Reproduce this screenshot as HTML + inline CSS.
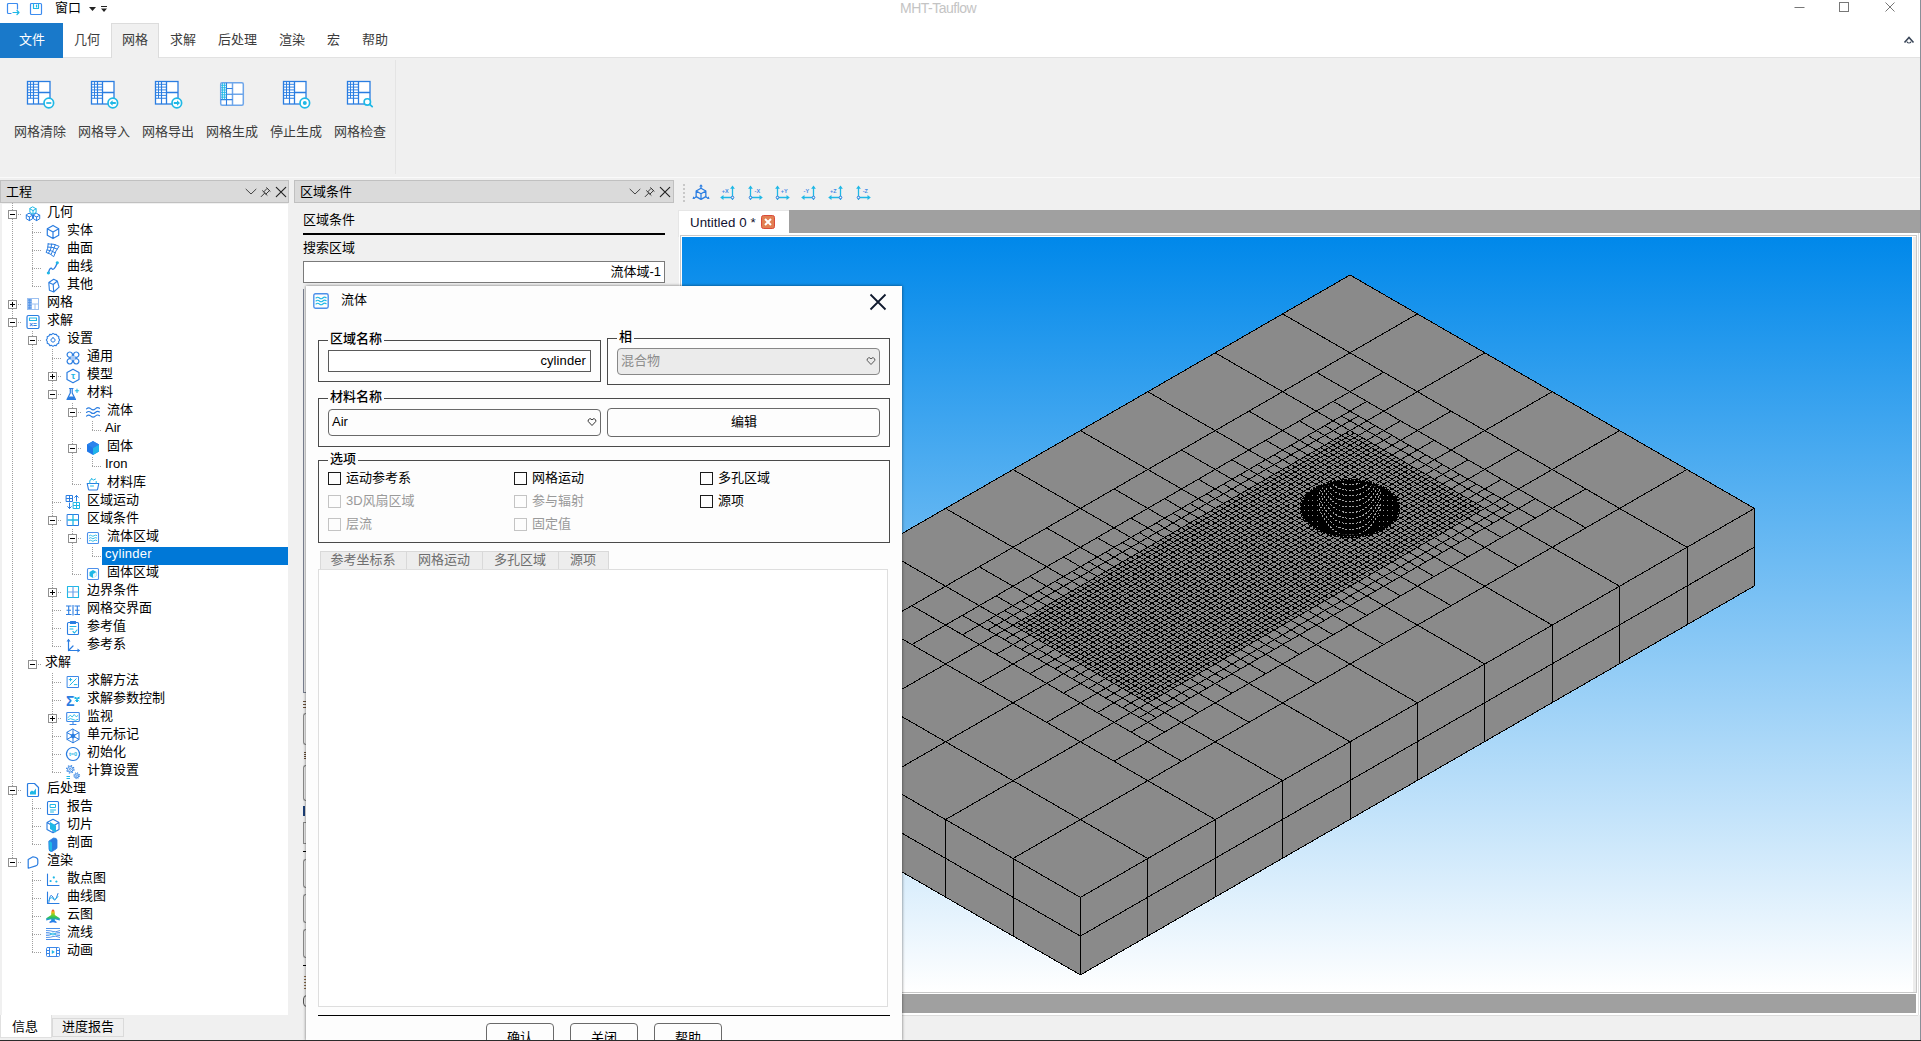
<!DOCTYPE html><html lang="zh"><head><meta charset="utf-8"><title>MHT-Tauflow</title><style>
*{box-sizing:border-box;margin:0;padding:0}
html,body{width:1921px;height:1041px;overflow:hidden;background:#f0f0f0}
body{font-family:"Liberation Sans","Noto Sans CJK SC",sans-serif;font-size:13px;color:#000;position:relative;line-height:1}
.a{position:absolute}
.t{position:absolute;white-space:nowrap;line-height:18px;height:18px}
svg{position:absolute;overflow:visible}
.exp{position:absolute;width:9px;height:9px;border:1px solid #919191;background:#fff}
.exp i{position:absolute;left:1px;top:3px;width:5px;height:1px;background:#000}
.exp b{position:absolute;left:3px;top:1px;width:1px;height:5px;background:#000}
.vd{position:absolute;width:1px;background-image:linear-gradient(#a0a0a0 50%,transparent 50%);background-size:1px 2px}
.hd{position:absolute;height:1px;background-image:linear-gradient(90deg,#a0a0a0 50%,transparent 50%);background-size:2px 1px}
.gb{position:absolute;border:1px solid #4a4a4a}
.gl{position:absolute;background:#fdfdfd;padding:0 2px;font-weight:500;line-height:16px;height:16px;white-space:nowrap}
.cb{position:absolute;width:13px;height:13px;border:1px solid #1a1a1a;background:#fdfdfd}
.cb.d{border-color:#c4c4c4}
.btn{position:absolute;border:1px solid #6a6a6a;border-radius:4px;background:#fdfdfd;text-align:center}
</style></head><body>
<div class="a" style="left:0;top:0;width:1920px;height:23px;background:#fff"></div>
<div class="a" style="left:0;top:23px;width:1920px;height:34px;background:#fff"></div>
<svg style="left:5px;top:1px" width="16" height="16" viewBox="0 0 16 16"><path d="M12.500 8V3.500a1 1 0 0 0-1-1h-8a1 1 0 0 0-1 1v8a1 1 0 0 0 1 1H6" fill="none" stroke="#3c8cf0" stroke-width="1.2" stroke-linejoin="round" stroke-linecap="round" /><path d="M8 11.500h6m-2-2l2 2-2 2" fill="none" stroke="#1fb8e6" stroke-width="1.2" stroke-linejoin="round" stroke-linecap="round" /></svg>
<svg style="left:28px;top:1px" width="16" height="16" viewBox="0 0 16 16"><path d="M3.500 2.500h9a1 1 0 0 1 1 1v9a1 1 0 0 1-1 1h-9a1 1 0 0 1-1-1v-9a1 1 0 0 1 1-1z" fill="none" stroke="#3c8cf0" stroke-width="1.2" stroke-linejoin="round" stroke-linecap="round" /><path d="M5.500 2.500v5h5v-5M8.500 4v2" fill="none" stroke="#1fb8e6" stroke-width="1.2" stroke-linejoin="round" stroke-linecap="round" /></svg>
<div class="t" style="left:55px;top:-1px">窗口</div>
<svg style="left:88px;top:6px" width="20" height="8" viewBox="0 0 20 8"><path d="M1 1h7l-3.5 4z" fill="#222"/><path d="M13 0h6v1h-6zM13 2.5h6l-3 3.5z" fill="#222"/></svg>
<div class="t" style="left:900px;top:-1px;color:#c4c4c4;font-size:14px;letter-spacing:-.5px">MHT-Tauflow</div>
<svg style="left:1790px;top:0" width="110" height="16" viewBox="0 0 110 16"><path d="M4.5 7.5h10" stroke="#777" fill="none"/><rect x="49.500" y="2.500" width="9" height="9" stroke="#777" fill="none"/><path d="M95.500 2.500l9 9m0-9l-9 9" stroke="#777" fill="none"/></svg>
<div class="a" style="left:0;top:57px;width:1920px;height:121px;background:#f0f0f0;border-top:1px solid #e2e2e2"></div>
<div class="a" style="left:0;top:23px;width:63px;height:35px;background:#1979ca"></div>
<div class="t" style="left:19px;top:31px;color:#fff">文件</div>
<div class="a" style="left:111px;top:23px;width:48px;height:35px;background:#f0f0f0;border:1px solid #dcdcdc;border-bottom:none"></div>
<div class="t" style="left:74px;top:31px;color:#3c3c3c">几何</div>
<div class="t" style="left:122px;top:31px;color:#3c3c3c">网格</div>
<div class="t" style="left:170px;top:31px;color:#3c3c3c">求解</div>
<div class="t" style="left:218px;top:31px;color:#3c3c3c">后处理</div>
<div class="t" style="left:279px;top:31px;color:#3c3c3c">渲染</div>
<div class="t" style="left:327px;top:31px;color:#3c3c3c">宏</div>
<div class="t" style="left:362px;top:31px;color:#3c3c3c">帮助</div>
<svg style="left:1903px;top:34px" width="12" height="10" viewBox="0 0 12 10"><path d="M1.500 8.500l4.500-5 4.500 5" fill="none" stroke="#3a4658" stroke-width="1.6"/><path d="M4 7.500a2 1.500 0 0 0 4 0" fill="none" stroke="#3a4658" stroke-width="1.200"/></svg>
<div class="a" style="left:0;top:177px;width:1920px;height:1px;background:#fafafa"></div>
<div class="a" style="left:395px;top:60px;width:1px;height:114px;background:#e4e4e4"></div>
<svg style="left:24px;top:78px" width="32" height="32" viewBox="0 0 32 32"><rect x="3.500" y="3.500" width="22.500" height="22.500" fill="#fff" stroke="#2a7de1" stroke-width="1.300"/><path d="M14.500 3.500v22.500M14.500 14.500h11.500" fill="none" stroke="#2a7de1" stroke-width="1.3" stroke-linejoin="round" stroke-linecap="butt"/><path d="M9.500 3.500v22.500M3.500 20.200h11" fill="none" stroke="#2a7de1" stroke-width="1.15" stroke-linejoin="round" stroke-linecap="butt"/><path d="M6.500 3.500v16.700M3.500 6.300h6M3.500 9.100h11M3.500 11.900h6M3.500 14.600h11M3.500 17.400h6M9.500 6.300h5M9.500 11.900h5M9.500 17.400h5" fill="none" stroke="#2a7de1" stroke-width="0.95" stroke-linejoin="round" stroke-linecap="butt"/><circle cx="24.800" cy="25" r="4.800" fill="#fff" stroke="#1fb8e6" stroke-width="1.700"/><path d="M22.300 25h5" fill="none" stroke="#1fb8e6" stroke-width="1.7" stroke-linejoin="round" stroke-linecap="butt"/></svg>
<div class="t" style="left:8px;top:123px;width:64px;text-align:center;color:#3c3c3c">网格清除</div>
<svg style="left:88px;top:78px" width="32" height="32" viewBox="0 0 32 32"><rect x="3.500" y="3.500" width="22.500" height="22.500" fill="#fff" stroke="#2a7de1" stroke-width="1.300"/><path d="M14.500 3.500v22.500M14.500 14.500h11.500" fill="none" stroke="#2a7de1" stroke-width="1.3" stroke-linejoin="round" stroke-linecap="butt"/><path d="M9.500 3.500v22.500M3.500 20.200h11" fill="none" stroke="#2a7de1" stroke-width="1.15" stroke-linejoin="round" stroke-linecap="butt"/><path d="M6.500 3.500v16.700M3.500 6.300h6M3.500 9.100h11M3.500 11.900h6M3.500 14.600h11M3.500 17.400h6M9.500 6.300h5M9.500 11.900h5M9.500 17.400h5" fill="none" stroke="#2a7de1" stroke-width="0.95" stroke-linejoin="round" stroke-linecap="butt"/><circle cx="24.800" cy="25" r="4.800" fill="#fff" stroke="#1fb8e6" stroke-width="1.700"/><path d="M21.600 25l3-2.700v1.800h3.200v1.800h-3.200v1.800z" fill="#1fb8e6"/></svg>
<div class="t" style="left:72px;top:123px;width:64px;text-align:center;color:#3c3c3c">网格导入</div>
<svg style="left:152px;top:78px" width="32" height="32" viewBox="0 0 32 32"><rect x="3.500" y="3.500" width="22.500" height="22.500" fill="#fff" stroke="#2a7de1" stroke-width="1.300"/><path d="M14.500 3.500v22.500M14.500 14.500h11.500" fill="none" stroke="#2a7de1" stroke-width="1.3" stroke-linejoin="round" stroke-linecap="butt"/><path d="M9.500 3.500v22.500M3.500 20.200h11" fill="none" stroke="#2a7de1" stroke-width="1.15" stroke-linejoin="round" stroke-linecap="butt"/><path d="M6.500 3.500v16.700M3.500 6.300h6M3.500 9.100h11M3.500 11.900h6M3.500 14.600h11M3.500 17.400h6M9.500 6.300h5M9.500 11.900h5M9.500 17.400h5" fill="none" stroke="#2a7de1" stroke-width="0.95" stroke-linejoin="round" stroke-linecap="butt"/><circle cx="24.800" cy="25" r="4.800" fill="#fff" stroke="#1fb8e6" stroke-width="1.700"/><path d="M28 25l-3-2.700v1.800h-3.200v1.800h3.200v1.800z" fill="#1fb8e6"/></svg>
<div class="t" style="left:136px;top:123px;width:64px;text-align:center;color:#3c3c3c">网格导出</div>
<svg style="left:216px;top:78px" width="32" height="32" viewBox="0 0 32 32"><rect x="4.700" y="4.700" width="22.600" height="22.600" rx="1.500" fill="#fff" stroke="#6ea6ea" stroke-width="1.500"/><path d="M16.500 4.700v22.600M16.500 16.200h10.800" fill="none" stroke="#6ea6ea" stroke-width="1.5" stroke-linejoin="round" stroke-linecap="butt"/><path d="M10.500 4.700v22.600M10.500 10.500h6M10.500 16.200h6M10.500 21.600h6M4.700 21.600h6" fill="none" stroke="#2f7fe0" stroke-width="1.1" stroke-linejoin="round" stroke-linecap="butt"/><path d="M6.600 5v16.500M8.600 5v16.500M5 7.300h5.500M5 9.700h5.500M5 12h5.500M5 14.400h5.500M5 16.800h5.500M5 19.200h5.500" fill="none" stroke="#1fb8e6" stroke-width="0.9" stroke-linejoin="round" stroke-linecap="butt"/></svg>
<div class="t" style="left:200px;top:123px;width:64px;text-align:center;color:#3c3c3c">网格生成</div>
<svg style="left:280px;top:78px" width="32" height="32" viewBox="0 0 32 32"><rect x="3.500" y="3.500" width="22.500" height="22.500" fill="#fff" stroke="#2a7de1" stroke-width="1.300"/><path d="M14.500 3.500v22.500M14.500 14.500h11.500" fill="none" stroke="#2a7de1" stroke-width="1.3" stroke-linejoin="round" stroke-linecap="butt"/><path d="M9.500 3.500v22.500M3.500 20.200h11" fill="none" stroke="#2a7de1" stroke-width="1.15" stroke-linejoin="round" stroke-linecap="butt"/><path d="M6.500 3.500v16.700M3.500 6.300h6M3.500 9.100h11M3.500 11.900h6M3.500 14.600h11M3.500 17.400h6M9.500 6.300h5M9.500 11.900h5M9.500 17.400h5" fill="none" stroke="#2a7de1" stroke-width="0.95" stroke-linejoin="round" stroke-linecap="butt"/><circle cx="24.800" cy="25" r="4.800" fill="#fff" stroke="#1fb8e6" stroke-width="1.700"/><circle cx="24.800" cy="25" r="2" fill="#1fb8e6"/></svg>
<div class="t" style="left:264px;top:123px;width:64px;text-align:center;color:#3c3c3c">停止生成</div>
<svg style="left:344px;top:78px" width="32" height="32" viewBox="0 0 32 32"><rect x="3.500" y="3.500" width="22.500" height="22.500" fill="#fff" stroke="#2a7de1" stroke-width="1.300"/><path d="M14.500 3.500v22.500M14.500 14.500h11.500" fill="none" stroke="#2a7de1" stroke-width="1.3" stroke-linejoin="round" stroke-linecap="butt"/><path d="M9.500 3.500v22.500M3.500 20.200h11" fill="none" stroke="#2a7de1" stroke-width="1.15" stroke-linejoin="round" stroke-linecap="butt"/><path d="M6.500 3.500v16.700M3.500 6.300h6M3.500 9.100h11M3.500 11.900h6M3.500 14.600h11M3.500 17.400h6M9.500 6.300h5M9.500 11.900h5M9.500 17.400h5" fill="none" stroke="#2a7de1" stroke-width="0.95" stroke-linejoin="round" stroke-linecap="butt"/><circle cx="23.300" cy="23.900" r="3.200" fill="#fff" stroke="#1fb8e6" stroke-width="1.600"/><path d="M25.700 26.300l2.500 2.300" fill="none" stroke="#1fb8e6" stroke-width="1.8" stroke-linejoin="round" stroke-linecap="round" /></svg>
<div class="t" style="left:328px;top:123px;width:64px;text-align:center;color:#3c3c3c">网格检查</div>
<div class="a" style="left:0;top:180px;width:289px;height:23px;background:#dadada;border:1px solid #c0c0c0"></div>
<div class="t" style="left:6px;top:183px">工程</div>
<svg style="left:244px;top:184px" width="46" height="16" viewBox="0 0 46 16"><path d="M2 5.200l5 4.800 5-4.800" fill="none" stroke="#444" stroke-width="1" stroke-linejoin="round" stroke-linecap="round" /><path d="M17.200 12.600L20.800 9M18.500 6.700l4.600 4.600M19.700 7.900l3.500-3.600 2.300 2.300-3.600 3.500M22.600 3.700l3.500 3.500" fill="none" stroke="#3a3a3a" stroke-width="1" stroke-linejoin="round" stroke-linecap="round" /><path d="M32.300 3.300l9.400 9.400m0-9.400l-9.400 9.400" fill="none" stroke="#222" stroke-width="1.15" stroke-linejoin="round" stroke-linecap="round" /></svg>
<div class="a" style="left:2px;top:204px;width:286px;height:811px;background:#fff"></div>
<div class="vd" style="left:32px;top:223px;height:64px"></div>
<div class="vd" style="left:32px;top:331px;height:334px"></div>
<div class="vd" style="left:52px;top:349px;height:298px"></div>
<div class="vd" style="left:72px;top:403px;height:82px"></div>
<div class="vd" style="left:92px;top:421px;height:10px"></div>
<div class="vd" style="left:92px;top:457px;height:10px"></div>
<div class="vd" style="left:72px;top:529px;height:46px"></div>
<div class="vd" style="left:92px;top:547px;height:10px"></div>
<div class="vd" style="left:52px;top:673px;height:100px"></div>
<div class="vd" style="left:32px;top:799px;height:46px"></div>
<div class="vd" style="left:32px;top:871px;height:82px"></div>
<div class="vd" style="left:12px;top:203px;height:659px"></div>
<div class="hd" style="left:18px;top:214px;width:4px"></div>
<div class="exp" style="left:8px;top:210px"><i></i></div>
<svg style="left:25px;top:206px" width="16" height="16" viewBox="0 0 16 16"><path d="M8.00 1.00l3.12 1.80v3.60l-3.12 1.80l-3.12 -1.80v-3.60zM4.88 2.80l3.12 1.80l3.12 -1.80M8.00 4.60v3.60" fill="none" stroke="#1fb8e6" stroke-width="1" stroke-linejoin="round" stroke-linecap="round" /><path d="M4.40 7.40l3.12 1.80v3.60l-3.12 1.80l-3.12 -1.80v-3.60zM1.28 9.20l3.12 1.80l3.12 -1.80M4.40 11.00v3.60" fill="none" stroke="#2a7de1" stroke-width="1" stroke-linejoin="round" stroke-linecap="round" /><path d="M11.60 7.40l3.12 1.80v3.60l-3.12 1.80l-3.12 -1.80v-3.60zM8.48 9.20l3.12 1.80l3.12 -1.80M11.60 11.00v3.60" fill="none" stroke="#2a7de1" stroke-width="1" stroke-linejoin="round" stroke-linecap="round" /></svg>
<div class="t" style="left:47px;top:203px">几何</div>
<div class="hd" style="left:32px;top:232px;width:10px"></div>
<svg style="left:45px;top:224px" width="16" height="16" viewBox="0 0 16 16"><path d="M8.00 1.40l5.72 3.30v6.60l-5.72 3.30l-5.72 -3.30v-6.60zM2.28 4.70l5.72 3.30l5.72 -3.30M8.00 8.00v6.60" fill="none" stroke="#2a7de1" stroke-width="1.2" stroke-linejoin="round" stroke-linecap="round" /></svg>
<div class="t" style="left:67px;top:221px">实体</div>
<div class="hd" style="left:32px;top:250px;width:10px"></div>
<svg style="left:45px;top:242px" width="16" height="16" viewBox="0 0 16 16"><path d="M3.200 1.900Q9.500 1.500 14.100 4.300Q10.500 8.500 8.700 14.700Q5.500 11.500 1.100 10.400Q3.200 6.500 3.200 1.900zM6.700 2Q6.500 7.500 3.500 11.200M10.300 2.800Q8.500 8 6 12.500M2.900 5Q8.500 5 12.200 7M2.200 7.900Q7 8.500 10.300 10.800" fill="none" stroke="#2a7de1" stroke-width="1" stroke-linejoin="round" stroke-linecap="round" /></svg>
<div class="t" style="left:67px;top:239px">曲面</div>
<div class="hd" style="left:32px;top:268px;width:10px"></div>
<svg style="left:45px;top:260px" width="16" height="16" viewBox="0 0 16 16"><path d="M3.400 13C4.500 8 6 7.500 7 8.800S10 9 12.300 2.800" fill="none" stroke="#2a7de1" stroke-width="1.3" stroke-linejoin="round" stroke-linecap="round" /><path d="M3.400 11.400a1.600 1.600 0 1 0 .01 0zM12.300 1.200a1.600 1.600 0 1 0 .01 0z" fill="#1fb8e6"/></svg>
<div class="t" style="left:67px;top:257px">曲线</div>
<div class="hd" style="left:32px;top:286px;width:10px"></div>
<svg style="left:45px;top:278px" width="16" height="16" viewBox="0 0 16 16"><path d="M3.800 4.500L8.700 1.200l3.600 1.800 1.800 6.100-5.400 4.900-4.300-1.800zM3.800 4.500l4.400 2 4.100-3.500M8.200 6.500l.5 7.500" fill="none" stroke="#2a7de1" stroke-width="1.1" stroke-linejoin="round" stroke-linecap="round" /></svg>
<div class="t" style="left:67px;top:275px">其他</div>
<div class="hd" style="left:18px;top:304px;width:4px"></div>
<div class="exp" style="left:8px;top:300px"><i></i><b></b></div>
<svg style="left:25px;top:296px" width="16" height="16" viewBox="0 0 16 16"><rect x="2.5" y="2.500" width="11" height="11" fill="#fff" stroke="#9cc0f0" stroke-width="1"/><rect x="3" y="3" width="3.500" height="10" fill="#7fb0ee"/><path d="M6.500 2.500v11M2.500 8h11M2.500 5.200h4M2.500 10.800h4M10 8v5.500" fill="none" stroke="#9cc0f0" stroke-width="1" stroke-linejoin="round" stroke-linecap="butt"/><path d="M4.700 3v10M3 4.200h3.500M3 6.500h3.500M3 9.400h3.500M3 11.900h3.500" fill="none" stroke="#4d8fe6" stroke-width="0.7" stroke-linejoin="round" stroke-linecap="butt"/></svg>
<div class="t" style="left:47px;top:293px">网格</div>
<div class="hd" style="left:18px;top:322px;width:4px"></div>
<div class="exp" style="left:8px;top:318px"><i></i></div>
<svg style="left:25px;top:314px" width="16" height="16" viewBox="0 0 16 16"><path d="M3.500 1.500h9a1.500 1.500 0 0 1 1.500 1.500v10a1.500 1.500 0 0 1-1.500 1.500h-9A1.500 1.500 0 0 1 2 13V3a1.500 1.500 0 0 1 1.500-1.500z" fill="none" stroke="#2a7de1" stroke-width="1.2" stroke-linejoin="round" stroke-linecap="round" /><path d="M4.500 4h7v2.500h-7z" fill="none" stroke="#1fb8e6" stroke-width="1.1" stroke-linejoin="round" stroke-linecap="round" /><text x="8" y="12.6" font-size="6.5" font-weight="700" fill="#2a7de1" text-anchor="middle" font-family="Liberation Sans,DejaVu Sans,sans-serif">×=</text></svg>
<div class="t" style="left:47px;top:311px">求解</div>
<div class="hd" style="left:38px;top:340px;width:4px"></div>
<div class="exp" style="left:28px;top:336px"><i></i></div>
<svg style="left:45px;top:332px" width="16" height="16" viewBox="0 0 16 16"><path d="M8 1.400l1.500 1 1.800-.2.800 1.600 1.700.700-.1 1.800L14.700 8l-1 1.500.100 1.800-1.700.700-.800 1.600-1.800-.200-1.500 1-1.500-1-1.800.200-.800-1.600-1.700-.700.100-1.800L1.300 8l1-1.500-.100-1.800 1.700-.700.800-1.600 1.800.200z" fill="none" stroke="#2a7de1" stroke-width="1.1" stroke-linejoin="round" stroke-linecap="round" /><path d="M8 5.900a2.100 2.100 0 1 0 .01 0z" fill="none" stroke="#2a7de1" stroke-width="1" stroke-linejoin="round" stroke-linecap="round" /></svg>
<div class="t" style="left:67px;top:329px">设置</div>
<div class="hd" style="left:52px;top:358px;width:10px"></div>
<svg style="left:65px;top:350px" width="16" height="16" viewBox="0 0 16 16"><path d="M4.800 2a2.700 2.700 0 1 0 .01 0zM11.200 2a2.700 2.700 0 1 0 .01 0zM4.800 8.600a2.700 2.700 0 1 0 .01 0zM11.200 8.600a2.700 2.700 0 1 0 .01 0z" fill="none" stroke="#2a7de1" stroke-width="1.2" stroke-linejoin="round" stroke-linecap="round" /><path d="M6 6h4v4H6z" fill="#a9c9f3"/></svg>
<div class="t" style="left:87px;top:347px">通用</div>
<div class="hd" style="left:58px;top:376px;width:4px"></div>
<div class="exp" style="left:48px;top:372px"><i></i><b></b></div>
<svg style="left:65px;top:368px" width="16" height="16" viewBox="0 0 16 16"><path d="M8 1.200l6 3.400v6.800l-6 3.400-6-3.400V4.600z" fill="none" stroke="#2a7de1" stroke-width="1.2" stroke-linejoin="round" stroke-linecap="round" /><text x="8" y="11" font-size="9.5" font-weight="700" fill="#1fb8e6" text-anchor="middle" font-family="Liberation Sans,DejaVu Sans,sans-serif">τ</text></svg>
<div class="t" style="left:87px;top:365px">模型</div>
<div class="hd" style="left:58px;top:394px;width:4px"></div>
<div class="exp" style="left:48px;top:390px"><i></i></div>
<svg style="left:65px;top:386px" width="16" height="16" viewBox="0 0 16 16"><path d="M4.500 2.500h3.500M5.300 2.500v4.500L2 13.500h8.500L7.200 7V2.500" fill="none" stroke="#2a7de1" stroke-width="1.2" stroke-linejoin="round" stroke-linecap="round" /><path d="M3.600 10.500h5.300l1.500 3H2.100z" fill="#2a7de1"/><path d="M12 3v3.400M10.300 4.700h3.400" fill="none" stroke="#1fb8e6" stroke-width="1.1" stroke-linejoin="round" stroke-linecap="round" /></svg>
<div class="t" style="left:87px;top:383px">材料</div>
<div class="hd" style="left:78px;top:412px;width:4px"></div>
<div class="exp" style="left:68px;top:408px"><i></i></div>
<svg style="left:85px;top:404px" width="16" height="16" viewBox="0 0 16 16"><path d="M1.500 4.800q2.200-2 4.400 0t4.400 0 4.200-.5M1.500 8.500q2.200-2 4.400 0t4.400 0 4.200-.5M1.500 12.200q2.200-2 4.400 0t4.400 0 4.200-.5" fill="none" stroke="#2a7de1" stroke-width="1.1" stroke-linejoin="round" stroke-linecap="round" /></svg>
<div class="t" style="left:107px;top:401px">流体</div>
<div class="hd" style="left:92px;top:430px;width:10px"></div>
<div class="t" style="left:105px;top:419px">Air</div>
<div class="hd" style="left:78px;top:448px;width:4px"></div>
<div class="exp" style="left:68px;top:444px"><i></i></div>
<svg style="left:85px;top:440px" width="16" height="16" viewBox="0 0 16 16"><path d="M8 1l6 3.400v7.200L8 15l-6-3.400V4.400z" fill="#1f78e8"/><path d="M8 8l6-3.400v7L8 15z" fill="#20b4ea"/><path d="M8 8L2 4.600 8 1.200l6 3.400z" fill="#2a83ec"/></svg>
<div class="t" style="left:107px;top:437px">固体</div>
<div class="hd" style="left:92px;top:466px;width:10px"></div>
<div class="t" style="left:105px;top:455px">Iron</div>
<div class="hd" style="left:72px;top:484px;width:10px"></div>
<svg style="left:85px;top:476px" width="16" height="16" viewBox="0 0 16 16"><path d="M2.200 7.500h11.600l-1.200 5.700a1 1 0 0 1-1 .800H4.400a1 1 0 0 1-1-.800z" fill="none" stroke="#2a7de1" stroke-width="1.1" stroke-linejoin="round" stroke-linecap="round" /><path d="M4.800 7.500V5q0-1.500 1.500-1.500M11.200 7.500V5.500M6.500 2.500l2 1.500 2-1M5.500 10h3" fill="none" stroke="#1fb8e6" stroke-width="1" stroke-linejoin="round" stroke-linecap="round" /></svg>
<div class="t" style="left:107px;top:473px">材料库</div>
<div class="hd" style="left:52px;top:502px;width:10px"></div>
<svg style="left:65px;top:494px" width="16" height="16" viewBox="0 0 16 16"><path d="M1.500 1.500h6v6h-6zM4.500 1.500v6M1.500 4.500h6" fill="none" stroke="#2a7de1" stroke-width="1" stroke-linejoin="round" stroke-linecap="round" /><path d="M8.500 8.500h6v6h-6zM11.500 8.500v6M8.500 11.500h6" fill="none" stroke="#1fb8e6" stroke-width="1" stroke-linejoin="round" stroke-linecap="round" /><path d="M4.500 9v5.500m-1.800-1.800l1.800 1.800 1.800-1.800M11.500 1.500V7m-1.800-3.700l1.800-1.800 1.800 1.800" fill="none" stroke="#2a7de1" stroke-width="1" stroke-linejoin="round" stroke-linecap="round" /></svg>
<div class="t" style="left:87px;top:491px">区域运动</div>
<div class="hd" style="left:58px;top:520px;width:4px"></div>
<div class="exp" style="left:48px;top:516px"><i></i></div>
<svg style="left:65px;top:512px" width="16" height="16" viewBox="0 0 16 16"><path d="M2.500 2.500h11v11h-11z" fill="none" stroke="#2a7de1" stroke-width="1" stroke-linejoin="round" stroke-linecap="round" /><path d="M8 2.500v11M2.500 8h11" fill="none" stroke="#1fb8e6" stroke-width="1.3" stroke-linejoin="round" stroke-linecap="butt"/></svg>
<div class="t" style="left:87px;top:509px">区域条件</div>
<div class="hd" style="left:78px;top:538px;width:4px"></div>
<div class="exp" style="left:68px;top:534px"><i></i></div>
<svg style="left:85px;top:530px" width="16" height="16" viewBox="0 0 16 16"><path d="M3.500 2.500h9a1 1 0 0 1 1 1v9a1 1 0 0 1-1 1h-9a1 1 0 0 1-1-1v-9a1 1 0 0 1 1-1z" fill="none" stroke="#4d90ea" stroke-width="1.1" stroke-linejoin="round" stroke-linecap="round" /><path d="M4.300 5.700q1.200-1.100 2.400 0t2.400 0 2.600-.3M4.300 8.200q1.200-1.100 2.400 0t2.400 0 2.600-.3M4.300 10.700q1.200-1.100 2.400 0t2.400 0 2.600-.3" fill="none" stroke="#1fb8e6" stroke-width="0.9" stroke-linejoin="round" stroke-linecap="round" /></svg>
<div class="t" style="left:107px;top:527px">流体区域</div>
<div class="hd" style="left:92px;top:556px;width:10px"></div>
<div class="a" style="left:102px;top:547px;width:186px;height:18px;background:#0078d7"></div>
<div class="t" style="left:105px;top:545px;color:#fff;letter-spacing:.25px">cylinder</div>
<div class="hd" style="left:72px;top:574px;width:10px"></div>
<svg style="left:85px;top:566px" width="16" height="16" viewBox="0 0 16 16"><path d="M3.500 2.500h9a1 1 0 0 1 1 1v9a1 1 0 0 1-1 1h-9a1 1 0 0 1-1-1v-9a1 1 0 0 1 1-1z" fill="none" stroke="#4d90ea" stroke-width="1.1" stroke-linejoin="round" stroke-linecap="round" /><path d="M8 4l3.500 2v4L8 12 4.500 10V6z" fill="#1fb8e6"/><path d="M8 8l3.500-2v4L8 12z" fill="#e8f6fc"/></svg>
<div class="t" style="left:107px;top:563px">固体区域</div>
<div class="hd" style="left:58px;top:592px;width:4px"></div>
<div class="exp" style="left:48px;top:588px"><i></i><b></b></div>
<svg style="left:65px;top:584px" width="16" height="16" viewBox="0 0 16 16"><path d="M2.500 2.500h11v11h-11z" fill="none" stroke="#1fb8e6" stroke-width="1.1" stroke-linejoin="round" stroke-linecap="round" /><path d="M8 2.500v11M2.500 8h11" fill="none" stroke="#6fa4ea" stroke-width="1.2" stroke-linejoin="round" stroke-linecap="butt"/></svg>
<div class="t" style="left:87px;top:581px">边界条件</div>
<div class="hd" style="left:52px;top:610px;width:10px"></div>
<svg style="left:65px;top:602px" width="16" height="16" viewBox="0 0 16 16"><path d="M1 4h5.500M1 12.500h5.500M1.500 8.300h4.500M3.700 4v8.500M8 3v10.500M9.500 4H15M9.500 12.500H15M10 8.300h4.500M12.300 4v8.500" fill="none" stroke="#2a7de1" stroke-width="1.1" stroke-linejoin="round" stroke-linecap="butt"/></svg>
<div class="t" style="left:87px;top:599px">网格交界面</div>
<div class="hd" style="left:52px;top:628px;width:10px"></div>
<svg style="left:65px;top:620px" width="16" height="16" viewBox="0 0 16 16"><path d="M3.500 2.500h9a1 1 0 0 1 1 1v10a1 1 0 0 1-1 1h-9a1 1 0 0 1-1-1v-10a1 1 0 0 1 1-1zM5.500 1.500h5v2h-5z" fill="none" stroke="#2a7de1" stroke-width="1.1" stroke-linejoin="round" stroke-linecap="round" /><path d="M5 6.500h6M5 9h3M8 11.500l1.500 1.500 2.500-3" fill="none" stroke="#1fb8e6" stroke-width="1.1" stroke-linejoin="round" stroke-linecap="round" /></svg>
<div class="t" style="left:87px;top:617px">参考值</div>
<div class="hd" style="left:52px;top:646px;width:10px"></div>
<svg style="left:65px;top:638px" width="16" height="16" viewBox="0 0 16 16"><path d="M3.500 2v10.500H14M3.500 12.500l4.500-4.500" fill="none" stroke="#2a7de1" stroke-width="1.2" stroke-linejoin="round" stroke-linecap="round" /><path d="M3.500 .8l2 2.700h-4zM15.200 12.500l-2.700 2v-4z" fill="#2a7de1"/></svg>
<div class="t" style="left:87px;top:635px">参考系</div>
<div class="hd" style="left:38px;top:664px;width:4px"></div>
<div class="exp" style="left:28px;top:660px"><i></i></div>
<div class="t" style="left:45px;top:653px">求解</div>
<div class="hd" style="left:52px;top:682px;width:10px"></div>
<svg style="left:65px;top:674px" width="16" height="16" viewBox="0 0 16 16"><path d="M2.500 2.500h11v11h-11z" fill="none" stroke="#3d88e8" stroke-width="1" stroke-linejoin="round" stroke-linecap="round" /><path d="M4.800 11.200l6.400-6.400M4.200 5.600h2.600M5.500 4.300v2.600M9.300 10.600h2.600" fill="none" stroke="#1fb8e6" stroke-width="1" stroke-linejoin="round" stroke-linecap="round" /></svg>
<div class="t" style="left:87px;top:671px">求解方法</div>
<div class="hd" style="left:52px;top:700px;width:10px"></div>
<svg style="left:65px;top:692px" width="16" height="16" viewBox="0 0 16 16"><text x="1" y="13.5" font-size="14" font-weight="700" fill="#2a7de1" text-anchor="start" font-family="Liberation Sans,DejaVu Sans,sans-serif">Σ</text><path d="M9.500 5h2v2h-2zM12.500 5h2v2h-2zM11 8h2v2h-2z" fill="#1fb8e6"/><path d="M10 5l4 4M14 5l-4 4" fill="none" stroke="#1fb8e6" stroke-width="0.8" stroke-linejoin="round" stroke-linecap="round" /></svg>
<div class="t" style="left:87px;top:689px">求解参数控制</div>
<div class="hd" style="left:58px;top:718px;width:4px"></div>
<div class="exp" style="left:48px;top:714px"><i></i><b></b></div>
<svg style="left:65px;top:710px" width="16" height="16" viewBox="0 0 16 16"><path d="M2.500 2.500h11a.800.800 0 0 1 .800.800v7.400a.800.800 0 0 1-.800.800h-11a.800.800 0 0 1-.800-.800V3.300a.800.800 0 0 1 .800-.800zM5 14.500h6M8 11.500v3" fill="none" stroke="#3d88e8" stroke-width="1.1" stroke-linejoin="round" stroke-linecap="round" /><path d="M3.200 7.500l2-2.300 2 1.800 2-2.500 2 2.300 1.600-1.200" fill="none" stroke="#1fb8e6" stroke-width="0.9" stroke-linejoin="round" stroke-linecap="round" /><path d="M3.200 9.500q2.400-1.800 4.800 0t4.800 0" fill="none" stroke="#1fb8e6" stroke-width="0.9" stroke-linejoin="round" stroke-linecap="round" /></svg>
<div class="t" style="left:87px;top:707px">监视</div>
<div class="hd" style="left:52px;top:736px;width:10px"></div>
<svg style="left:65px;top:728px" width="16" height="16" viewBox="0 0 16 16"><path d="M8 1.200l6 3.400v6.800l-6 3.400-6-3.400V4.600zM8 1.200v13.600M2 4.600l12 6.800M14 4.600L2 11.400" fill="none" stroke="#2a7de1" stroke-width="1" stroke-linejoin="round" stroke-linecap="round" /><path d="M8 5.500l2.200 1.300v2.500L8 10.600 5.800 9.300V6.800z" fill="#2a7de1"/></svg>
<div class="t" style="left:87px;top:725px">单元标记</div>
<div class="hd" style="left:52px;top:754px;width:10px"></div>
<svg style="left:65px;top:746px" width="16" height="16" viewBox="0 0 16 16"><path d="M8 1.500a6.500 6.500 0 1 0 .01 0z" fill="none" stroke="#2a7de1" stroke-width="1.2" stroke-linejoin="round" stroke-linecap="round" /><text x="8" y="10" font-size="5.6" font-weight="700" fill="#1fb8e6" text-anchor="middle" font-family="Liberation Sans,DejaVu Sans,sans-serif">t=0</text></svg>
<div class="t" style="left:87px;top:743px">初始化</div>
<div class="hd" style="left:52px;top:772px;width:10px"></div>
<svg style="left:65px;top:764px" width="16" height="16" viewBox="0 0 16 16"><circle cx="5.300" cy="5.300" r="2.700" fill="none" stroke="#2a7de1" stroke-width=".9"/><circle cx="5.300" cy="5.300" r="3.700" fill="none" stroke="#2a7de1" stroke-width="1.100" stroke-dasharray="1.450 1.450"/><circle cx="5.300" cy="5.300" r="1" fill="none" stroke="#2a7de1" stroke-width=".8"/><circle cx="11.700" cy="11.700" r="2" fill="none" stroke="#2a7de1" stroke-width=".9"/><circle cx="11.700" cy="11.700" r="2.900" fill="none" stroke="#2a7de1" stroke-width="1" stroke-dasharray="1.140 1.140"/><circle cx="11.700" cy="11.700" r=".7" fill="none" stroke="#2a7de1" stroke-width=".7"/><path d="M1.500 12.500h3.500M1.500 14.500h3.500" fill="none" stroke="#1fb8e6" stroke-width="1" stroke-linejoin="round" stroke-linecap="butt"/></svg>
<div class="t" style="left:87px;top:761px">计算设置</div>
<div class="hd" style="left:18px;top:790px;width:4px"></div>
<div class="exp" style="left:8px;top:786px"><i></i></div>
<svg style="left:25px;top:782px" width="16" height="16" viewBox="0 0 16 16"><path d="M3.500 1.500h6l4 4v8a1 1 0 0 1-1 1h-9a1 1 0 0 1-1-1v-11a1 1 0 0 1 1-1z" fill="none" stroke="#2a7de1" stroke-width="1.2" stroke-linejoin="round" stroke-linecap="round" /><path d="M5 12.500V10l2-1.500 1.500 1 2.500-3v6z" fill="#1fb8e6"/></svg>
<div class="t" style="left:47px;top:779px">后处理</div>
<div class="hd" style="left:32px;top:808px;width:10px"></div>
<svg style="left:45px;top:800px" width="16" height="16" viewBox="0 0 16 16"><path d="M3.500 1.500h9a1 1 0 0 1 1 1v11a1 1 0 0 1-1 1h-9a1 1 0 0 1-1-1v-11a1 1 0 0 1 1-1z" fill="none" stroke="#2a7de1" stroke-width="1.1" stroke-linejoin="round" stroke-linecap="round" /><path d="M5.500 4.500h5v3h-5zM5.500 10h5M5.500 12h3" fill="none" stroke="#1fb8e6" stroke-width="1" stroke-linejoin="round" stroke-linecap="round" /></svg>
<div class="t" style="left:67px;top:797px">报告</div>
<div class="hd" style="left:32px;top:826px;width:10px"></div>
<svg style="left:45px;top:818px" width="16" height="16" viewBox="0 0 16 16"><path d="M8 1.200l6 3.400v6.800l-6 3.400-6-3.400V4.600zM2 4.600l6 3.400 6-3.400M8 8v6.800" fill="none" stroke="#2a7de1" stroke-width="1.1" stroke-linejoin="round" stroke-linecap="round" /><path d="M5 4l6 3.400v7L5 11z" fill="#1fb8e6"/></svg>
<div class="t" style="left:67px;top:815px">切片</div>
<div class="hd" style="left:32px;top:844px;width:10px"></div>
<svg style="left:45px;top:836px" width="16" height="16" viewBox="0 0 16 16"><path d="M4 5l4.500-3q3.500 0 3.500 2v7.500q0 1-1 1.500l-4 2.500q-3 0-3-2z" fill="#2a7de1"/><path d="M4 5.200q2.500 0 3 1.500v8.500q-3 0-3-2z" fill="#1fb8e6"/><path d="M4 5l4.500-3q3.500 0 3.500 2v7.500q0 1-1 1.500l-4 2.500q-3 0-3-2z" fill="none" stroke="#2a7de1" stroke-width="0.8" stroke-linejoin="round" stroke-linecap="round" /></svg>
<div class="t" style="left:67px;top:833px">剖面</div>
<div class="hd" style="left:18px;top:862px;width:4px"></div>
<div class="exp" style="left:8px;top:858px"><i></i></div>
<svg style="left:25px;top:854px" width="16" height="16" viewBox="0 0 16 16"><path d="M3.200 5.500L8 2.800q4.800.500 4.800 3.200v3.500q0 1.800-2 2.400L3.200 14.200z" fill="none" stroke="#2a7de1" stroke-width="1.2" stroke-linejoin="round" stroke-linecap="round" /></svg>
<div class="t" style="left:47px;top:851px">渲染</div>
<div class="hd" style="left:32px;top:880px;width:10px"></div>
<svg style="left:45px;top:872px" width="16" height="16" viewBox="0 0 16 16"><path d="M2.500 2v11.500H14" fill="none" stroke="#2a7de1" stroke-width="1.1" stroke-linejoin="round" stroke-linecap="round" /><path d="M8.800 4.300a1.100 1.100 0 1 0 .01 0zM5.600 7.900a1.100 1.100 0 1 0 .01 0zM11.400 8.400a1.100 1.100 0 1 0 .01 0z" fill="#1fb8e6"/></svg>
<div class="t" style="left:67px;top:869px">散点图</div>
<div class="hd" style="left:32px;top:898px;width:10px"></div>
<svg style="left:45px;top:890px" width="16" height="16" viewBox="0 0 16 16"><path d="M2.500 2v11.500H14" fill="none" stroke="#2a7de1" stroke-width="1.1" stroke-linejoin="round" stroke-linecap="round" /><path d="M3.800 12.500Q5 4.500 6.500 5.500T9 9.500T13 3.500" fill="none" stroke="#2a7de1" stroke-width="1" stroke-linejoin="round" stroke-linecap="round" /><path d="M3.800 10.500Q6 6 8 8.500T13 6.500" fill="none" stroke="#1fb8e6" stroke-width="0.9" stroke-linejoin="round" stroke-linecap="round" /></svg>
<div class="t" style="left:67px;top:887px">曲线图</div>
<div class="hd" style="left:32px;top:916px;width:10px"></div>
<svg style="left:45px;top:908px" width="16" height="16" viewBox="0 0 16 16"><defs><linearGradient id="jet" x1="0" y1="0" x2="0" y2="1"><stop offset="0" stop-color="#e8312a"/><stop offset=".22" stop-color="#f3b61c"/><stop offset=".4" stop-color="#7ed321"/><stop offset=".6" stop-color="#2fc060"/><stop offset=".78" stop-color="#1f8fe8"/><stop offset="1" stop-color="#2a6de8"/></linearGradient></defs><path d="M8 1.200Q9.800 2 9.800 4.500V7l5 3.200v2.300l-5-1.300v1.300l1.700 1.200v1.300L8 14.200l-3.500.800v-1.300l1.700-1.200v-1.300l-5 1.300v-2.300l5-3.200V4.500Q6.200 2 8 1.200z" fill="url(#jet)"/></svg>
<div class="t" style="left:67px;top:905px">云图</div>
<div class="hd" style="left:32px;top:934px;width:10px"></div>
<svg style="left:45px;top:926px" width="16" height="16" viewBox="0 0 16 16"><path d="M1 2.500h14M1 13.500h14" fill="none" stroke="#4a8fe8" stroke-width="1.1" stroke-linejoin="round" stroke-linecap="butt"/><path d="M1 4.500Q6 4.500 8 5.500T15 4.500M1 11.500Q6 11.500 8 10.500T15 11.500M1 6.500q3.500 0 5 1M15 6.500q-3.500 0-5 1M1 9.500q3.500 0 5-1M15 9.500q-3.500 0-5-1" fill="none" stroke="#5b9aec" stroke-width="1" stroke-linejoin="round" stroke-linecap="butt"/><path d="M1 8h3.500M11.500 8H15" fill="none" stroke="#8fbaf2" stroke-width="1" stroke-linejoin="round" stroke-linecap="butt"/><path d="M5.500 8q2.500-2 5 0-2.500 2-5 0z" fill="none" stroke="#1fb8e6" stroke-width="0.9" stroke-linejoin="round" stroke-linecap="round" /></svg>
<div class="t" style="left:67px;top:923px">流线</div>
<div class="hd" style="left:32px;top:952px;width:10px"></div>
<svg style="left:45px;top:944px" width="16" height="16" viewBox="0 0 16 16"><path d="M2.500 3.500h11a1 1 0 0 1 1 1v7a1 1 0 0 1-1 1h-11a1 1 0 0 1-1-1v-7a1 1 0 0 1 1-1zM4.500 3.500v9M11.500 3.500v9M1.500 6.500h3M1.500 9.500h3M11.500 6.500h3M11.500 9.500h3" fill="none" stroke="#3d88e8" stroke-width="1" stroke-linejoin="round" stroke-linecap="round" /><path d="M6.800 6l3 2-3 2z" fill="#1fb8e6"/></svg>
<div class="t" style="left:67px;top:941px">动画</div>
<div class="a" style="left:0;top:1015px;width:1920px;height:25px;background:#f0f0f0"></div>
<div class="a" style="left:0;top:1015px;width:52px;height:23px;background:#fff;border:1px solid #e0e0e0;border-top:none"></div>
<div class="a" style="left:52px;top:1018px;width:72px;height:19px;background:#f0f0f0;border:1px solid #dadada"></div>
<div class="t" style="left:12px;top:1018px">信息</div>
<div class="t" style="left:62px;top:1018px">进度报告</div>
<div class="a" style="left:294px;top:180px;width:380px;height:23px;background:#dadada;border:1px solid #c0c0c0"></div>
<div class="t" style="left:300px;top:183px">区域条件</div>
<svg style="left:628px;top:184px" width="46" height="16" viewBox="0 0 46 16"><path d="M2 5.200l5 4.800 5-4.800" fill="none" stroke="#444" stroke-width="1" stroke-linejoin="round" stroke-linecap="round" /><path d="M17.200 12.600L20.800 9M18.500 6.700l4.600 4.600M19.700 7.900l3.500-3.600 2.300 2.300-3.600 3.500M22.600 3.700l3.500 3.500" fill="none" stroke="#3a3a3a" stroke-width="1" stroke-linejoin="round" stroke-linecap="round" /><path d="M32.300 3.300l9.400 9.400m0-9.400l-9.400 9.400" fill="none" stroke="#222" stroke-width="1.15" stroke-linejoin="round" stroke-linecap="round" /></svg>
<div class="t" style="left:303px;top:211px">区域条件</div>
<div class="a" style="left:303px;top:233px;width:362px;height:2px;background:#000"></div>
<div class="t" style="left:303px;top:239px">搜索区域</div>
<div class="a" style="left:303px;top:261px;width:362px;height:22px;background:#fff;border:1px solid #7a7a7a"></div>
<div class="t" style="left:560px;top:263px;width:101px;text-align:right">流体域-1</div>
<div class="a" style="left:303px;top:289px;width:3px;height:404px;border-left:1px solid #7a8090;border-bottom:1px solid #7a8090"></div>
<div class="a" style="left:303px;top:822px;width:4px;height:22px;border:1px solid #8a8a8a;border-right:none"></div>
<div class="a" style="left:303px;top:995px;width:8px;height:12px;border:1px solid #555;border-radius:6px"></div>
<div class="a" style="left:303px;top:713px;width:4px;height:32px;border:1px solid #8a8a8a;border-right:none;border-radius:3px 0 0 3px"></div>
<div class="a" style="left:303px;top:765px;width:4px;height:36px;border:1px solid #8a8a8a;border-right:none;border-radius:3px 0 0 3px"></div>
<div class="a" style="left:303px;top:859px;width:4px;height:29px;border:1px solid #8a8a8a;border-right:none;border-radius:3px 0 0 3px"></div>
<div class="a" style="left:303px;top:894px;width:4px;height:29px;border:1px solid #8a8a8a;border-right:none;border-radius:3px 0 0 3px"></div>
<div class="a" style="left:303px;top:929px;width:4px;height:29px;border:1px solid #8a8a8a;border-right:none;border-radius:3px 0 0 3px"></div>
<div class="a" style="left:303px;top:851px;width:3px;height:1px;background:#000"></div>
<div class="a" style="left:303px;top:701px;width:3px;height:8px;background-image:linear-gradient(#6a5038 50%,transparent 50%);background-size:3px 3px"></div>
<div class="a" style="left:304px;top:752px;width:2px;height:8px;background-image:linear-gradient(#6a5038 50%,transparent 50%);background-size:2px 2px"></div>
<div class="a" style="left:304px;top:976px;width:2px;height:14px;background-image:linear-gradient(#8a6a48 50%,transparent 50%);background-size:2px 3px"></div>
<div class="a" style="left:303px;top:965px;width:3px;height:1px;background:#000"></div>
<div class="a" style="left:303px;top:806px;width:2px;height:10px;background:#1c3f78"></div>
<div class="a" style="left:683px;top:184px;width:2px;height:20px;background-image:linear-gradient(#c8c8c8 50%,transparent 50%);background-size:2px 4px"></div>
<svg style="left:692px;top:184px" width="18" height="18" viewBox="0 0 18 18"><path d="M9.00 4.20l4.85 2.80v5.60l-4.85 2.80l-4.85 -2.80v-5.60zM4.15 7.00l4.85 2.80l4.85 -2.80M9.00 9.80v5.60" fill="none" stroke="#2a7de1" stroke-width="1.3" stroke-linejoin="round" stroke-linecap="round" /><path d="M9 4V2M4 13l-2 1.200M14 13l2 1.200" fill="none" stroke="#2a7de1" stroke-width="1.2" stroke-linejoin="round" stroke-linecap="round" /><path d="M9 .3l1.900 2.200H7.100zM.5 15l.8-2.700 1.700 2.400zM17.500 15l-.8-2.700-1.700 2.400z" fill="#2a7de1"/></svg>
<svg style="left:719px;top:184px" width="18" height="18" viewBox="0 0 18 18"><path d="M13.5 16V4M13.5 13.500H3.500" fill="none" stroke="#1fb8e6" stroke-width="1.3" stroke-linejoin="round" stroke-linecap="butt"/><path d="M13.5 1.500l2.400 3.300h-4.800zM1.200 13.500l3.300-2.400v4.800z" fill="#1fb8e6"/><circle cx="13.5" cy="13.500" r="1.300" fill="#f0f0f0" stroke="#2a7de1" stroke-width="1"/><text x="6.3" y="9.300" font-size="5.500" font-weight="700" fill="#3f8ae6" text-anchor="middle" font-family="Liberation Sans,sans-serif">+X</text></svg>
<svg style="left:746px;top:184px" width="18" height="18" viewBox="0 0 18 18"><path d="M4.5 16V4M4.5 13.500H14.500" fill="none" stroke="#1fb8e6" stroke-width="1.3" stroke-linejoin="round" stroke-linecap="butt"/><path d="M4.5 1.500l2.400 3.300h-4.800zM16.800 13.500l-3.300-2.400v4.800z" fill="#1fb8e6"/><circle cx="4.5" cy="13.500" r="1.300" fill="#f0f0f0" stroke="#2a7de1" stroke-width="1"/><text x="11.3" y="9.300" font-size="5.500" font-weight="700" fill="#3f8ae6" text-anchor="middle" font-family="Liberation Sans,sans-serif">-X</text></svg>
<svg style="left:773px;top:184px" width="18" height="18" viewBox="0 0 18 18"><path d="M4.5 16V4M4.5 13.500H14.500" fill="none" stroke="#1fb8e6" stroke-width="1.3" stroke-linejoin="round" stroke-linecap="butt"/><path d="M4.5 1.500l2.400 3.300h-4.800zM16.800 13.500l-3.300-2.400v4.800z" fill="#1fb8e6"/><circle cx="4.5" cy="13.500" r="1.300" fill="#f0f0f0" stroke="#2a7de1" stroke-width="1"/><text x="11.3" y="9.300" font-size="5.500" font-weight="700" fill="#3f8ae6" text-anchor="middle" font-family="Liberation Sans,sans-serif">+Y</text></svg>
<svg style="left:800px;top:184px" width="18" height="18" viewBox="0 0 18 18"><path d="M13.5 16V4M13.5 13.500H3.500" fill="none" stroke="#1fb8e6" stroke-width="1.3" stroke-linejoin="round" stroke-linecap="butt"/><path d="M13.5 1.500l2.400 3.300h-4.800zM1.200 13.500l3.300-2.400v4.800z" fill="#1fb8e6"/><circle cx="13.5" cy="13.500" r="1.300" fill="#f0f0f0" stroke="#2a7de1" stroke-width="1"/><text x="6.3" y="9.300" font-size="5.500" font-weight="700" fill="#3f8ae6" text-anchor="middle" font-family="Liberation Sans,sans-serif">-Y</text></svg>
<svg style="left:827px;top:184px" width="18" height="18" viewBox="0 0 18 18"><path d="M13.5 16V4M13.5 13.500H3.500" fill="none" stroke="#1fb8e6" stroke-width="1.3" stroke-linejoin="round" stroke-linecap="butt"/><path d="M13.5 1.500l2.400 3.300h-4.800zM1.200 13.500l3.300-2.400v4.800z" fill="#1fb8e6"/><circle cx="13.5" cy="13.500" r="1.300" fill="#f0f0f0" stroke="#2a7de1" stroke-width="1"/><text x="6.3" y="9.300" font-size="5.500" font-weight="700" fill="#3f8ae6" text-anchor="middle" font-family="Liberation Sans,sans-serif">+Z</text></svg>
<svg style="left:854px;top:184px" width="18" height="18" viewBox="0 0 18 18"><path d="M4.5 16V4M4.5 13.500H14.500" fill="none" stroke="#1fb8e6" stroke-width="1.3" stroke-linejoin="round" stroke-linecap="butt"/><path d="M4.5 1.500l2.400 3.300h-4.800zM16.800 13.500l-3.300-2.400v4.800z" fill="#1fb8e6"/><circle cx="4.5" cy="13.500" r="1.300" fill="#f0f0f0" stroke="#2a7de1" stroke-width="1"/><text x="11.3" y="9.300" font-size="5.500" font-weight="700" fill="#3f8ae6" text-anchor="middle" font-family="Liberation Sans,sans-serif">-Z</text></svg>
<div class="a" style="left:679px;top:210px;width:1241px;height:23px;background:#a0a0a0"></div>
<div class="a" style="left:678px;top:210px;width:111px;height:27px;background:#fff;border-top:1px solid #e6e6e6;border-left:1px solid #e6e6e6"></div>
<div class="t" style="left:690px;top:214px;color:#101030;font-size:13.3px;letter-spacing:.05px">Untitled 0 *</div>
<svg style="left:761px;top:215px" width="14" height="14" viewBox="0 0 14 14"><rect x=".5" y=".5" width="13" height="13" rx="2" fill="#e27f52" stroke="#d94a3a"/><path d="M4 4l6 6m0-6l-6 6" stroke="#fff" stroke-width="2"/></svg>
<div class="a" style="left:679px;top:233px;width:1241px;height:782px;background:#fff"></div>
<div class="a" style="left:680px;top:235px;width:1237px;height:758px;border:1px solid #c8c8c8;background:#fff"></div>
<div class="a" style="left:1913px;top:237px;width:3px;height:755px;background:#ececec"></div>
<div class="a" style="left:1918px;top:233px;width:1px;height:782px;background:#e2e2e2"></div>
<div class="a" style="left:679px;top:994px;width:1237px;height:19px;background:#a0a0a0"></div>
<div class="a" style="left:679px;top:1015px;width:1239px;height:1px;background:#dcdcdc"></div>
<svg shape-rendering="crispEdges" style="left:682px;top:237px;overflow:hidden" width="1230" height="755" viewBox="0 0 1230 755">
<defs><linearGradient id="bg" x1="0" y1="0" x2="0" y2="1"><stop offset="0" stop-color="#0088ea"/><stop offset="1" stop-color="#ffffff"/></linearGradient></defs>
<rect x="0" y="0" width="1230" height="755" fill="url(#bg)"/>
<polygon points="668,38 1072.4,271.4 1072.4,348.9 398.4,737.9 -6,504.5 -6,427" fill="#8a8a8a"/>
<path d="M668 38L-6 427M735.4 76.9L61.4 465.9M701.7 135.2L229.9 407.5M684.8 164.4L280.5 397.8M676.4 179L305.7 393M802.8 115.8L128.8 504.8M672.2 196L335.2 390.5M693.3 188.7L322.6 402.7M680.6 200.9L343.6 395.4M718.5 183.9L314.1 417.3M689.1 205.8L352.1 400.3M710.1 198.5L339.4 412.4M697.5 210.6L360.5 405.1M769.1 174.1L297.3 446.5M705.9 215.5L368.9 410M727 208.2L356.3 422.1M714.3 220.3L377.3 414.8M752.2 203.3L347.8 436.7M722.8 225.2L385.8 419.7M743.8 217.9L373.1 431.9M731.2 230.1L394.2 424.6M870.2 154.7L196.2 543.7M739.6 234.9L402.6 429.4M760.7 227.6L390 441.6M748 239.8L411 434.3M786 222.8L381.5 456.2M756.5 244.7L419.5 439.2M777.5 237.4L406.8 451.3M764.9 249.5L427.9 444M836.5 213L364.7 485.3M773.3 254.4L436.3 448.9M794.4 247.1L423.7 461M781.7 259.2L444.7 453.7M819.7 242.2L415.2 475.6M790.2 264.1L453.2 458.6M811.2 256.8L440.5 470.8M798.6 269L461.6 463.5M937.6 193.6L263.6 582.6M828.1 266.5L457.4 480.5M853.3 261.7L449 495.1M903.9 251.9L432.1 524.2M1005 232.5L331 621.5M1072.4 271.4L398.4 660.4M668 38L1072.4 271.4M600.6 76.9L1005 310.3M634.3 135.2L903.9 290.9M651.2 164.4L853.3 281.1M659.6 179L828.1 276.3M533.2 115.8L937.6 349.2M663.8 196L798.6 273.8M642.7 188.7L811.2 286M655.4 200.9L790.2 278.7M617.5 183.9L819.7 300.6M646.9 205.8L781.7 283.6M625.9 198.5L794.4 295.7M638.5 210.6L773.3 288.4M566.9 174.1L836.5 329.8M630.1 215.5L764.9 293.3M609 208.2L777.5 305.4M621.7 220.3L756.5 298.1M583.8 203.3L786 320M613.2 225.2L748 303M592.2 217.9L760.7 315.2M604.8 230.1L739.6 307.9M465.8 154.7L870.2 388.1M596.4 234.9L731.2 312.7M575.3 227.6L743.8 324.9M588 239.8L722.8 317.6M550 222.8L752.2 339.5M579.5 244.7L714.3 322.5M558.5 237.4L727 334.6M571.1 249.5L705.9 327.3M499.5 213L769.1 368.6M562.7 254.4L697.5 332.2M541.6 247.1L710.1 344.3M554.3 259.2L689.1 337M516.3 242.2L718.5 358.9M545.8 264.1L680.6 341.9M524.8 256.8L693.3 354.1M537.4 269L672.2 346.8M398.4 193.6L802.8 427M529 273.8L663.8 351.6M507.9 266.5L676.4 363.8M520.6 278.7L655.4 356.5M482.7 261.7L684.8 378.4M512.1 283.6L646.9 361.4M491.1 276.3L659.6 373.5M503.7 288.4L638.5 366.2M432.1 251.9L701.7 407.5M495.3 293.3L630.1 371.1M474.2 286L642.7 383.2M486.9 298.1L621.7 375.9M449 281.1L651.2 397.8M478.4 303L613.2 380.8M457.4 295.7L625.9 393M470 307.9L604.8 385.7M331 232.5L735.4 465.9M461.6 312.7L596.4 390.5M440.5 305.4L609 402.7M453.2 317.6L588 395.4M415.2 300.6L617.5 417.3M444.7 322.5L579.5 400.3M423.7 315.2L592.2 412.4M436.3 327.3L571.1 405.1M364.7 290.9L634.3 446.5M427.9 332.2L562.7 410M406.8 324.9L575.3 422.1M419.5 337L554.3 414.8M381.5 320L583.8 436.7M411 341.9L545.8 419.7M390 334.6L558.5 431.9M402.6 346.8L537.4 424.6M263.6 271.4L668 504.8M394.2 351.6L529 429.4M373.1 344.3L541.6 441.6M385.8 356.5L520.6 434.3M347.8 339.5L550 456.2M377.3 361.4L512.1 439.2M356.3 354.1L524.8 451.3M368.9 366.2L503.7 444M297.3 329.8L566.9 485.3M360.5 371.1L495.3 448.9M339.4 363.8L507.9 461M352.1 375.9L486.9 453.7M314.1 358.9L516.3 475.6M343.6 380.8L478.4 458.6M322.6 373.5L491.1 470.8M335.2 385.7L470 463.5M196.2 310.3L600.6 543.7M305.7 383.2L474.2 480.5M280.5 378.4L482.7 495.1M229.9 368.6L499.5 524.2M128.8 349.2L533.2 582.6M61.4 388.1L465.8 621.5M-6 427L398.4 660.4M1072.4 271.4L1072.4 348.9M1005 310.3L1005 387.8M937.6 349.2L937.6 426.7M870.2 388.1L870.2 465.6M802.8 427L802.8 504.5M735.4 465.9L735.4 543.4M668 504.8L668 582.3M600.6 543.7L600.6 621.2M533.2 582.6L533.2 660.1M465.8 621.5L465.8 699M398.4 660.4L398.4 737.9M1072.4 310.1L398.4 699.1M1072.4 348.9L398.4 737.9M-6 427L-6 504.5M61.4 465.9L61.4 543.4M128.8 504.8L128.8 582.3M196.2 543.7L196.2 621.2M263.6 582.6L263.6 660.1M331 621.5L331 699M-6 465.8L398.4 699.1M-6 504.5L398.4 737.9" fill="none" stroke="#000" stroke-width="1"/>
<ellipse cx="668" cy="271.4" rx="50.5" ry="29.5" fill="#000"/>
<clipPath id="holeclip"><ellipse cx="668" cy="271.4" rx="46.5" ry="26"/></clipPath>
<g clip-path="url(#holeclip)"><path d="M637 221.6C647 243.6 657 247.6 668 247.6S689 243.6 699 221.6M637 227.2C647 249.2 657 253.2 668 253.2S689 249.2 699 227.2M637 232.8C647 254.8 657 258.8 668 258.8S689 254.8 699 232.8M637 238.4C647 260.4 657 264.4 668 264.4S689 260.4 699 238.4M637 244C647 266 657 270 668 270S689 266 699 244M637 249.6C647 271.6 657 275.6 668 275.6S689 271.6 699 249.6M637 255.2C647 277.2 657 281.2 668 281.2S689 277.2 699 255.2M637 260.8C647 282.8 657 286.8 668 286.8S689 282.8 699 260.8M637 266.4C647 288.4 657 292.4 668 292.4S689 288.4 699 266.4M637 272C647 294 657 298 668 298S689 294 699 272" fill="none" stroke="#a0a0a0" stroke-width="1" stroke-dasharray="2 1.5"/><path d="M622 252.5H639M697 252.5H714M622 258.5H639M697 258.5H714M622 263.5H639M697 263.5H714M622 268.5H639M697 268.5H714M622 273.5H639M697 273.5H714M622 278.5H639M697 278.5H714M622 284.5H639M697 284.5H714M622 289.5H639M697 289.5H714M622 294.5H639M697 294.5H714" fill="none" stroke="#9a9a9a" stroke-width="1" stroke-dasharray="1 3.2"/></g>
<ellipse cx="668" cy="271.4" rx="49.5" ry="28.5" fill="none" stroke="#8a8a8a" stroke-width="1" stroke-dasharray="1 2.6"/>
</svg>
<div class="a" style="left:306px;top:286px;width:596px;height:755px;background:#fdfdfd;box-shadow:0 0 3px rgba(0,0,0,.55)"></div>
<svg style="left:313px;top:293px" width="16" height="16" viewBox="0 0 16 16"><path d="M2.500 .800h11a1.700 1.700 0 0 1 1.700 1.700v11a1.700 1.700 0 0 1-1.700 1.700h-11a1.700 1.700 0 0 1-1.700-1.700v-11a1.700 1.700 0 0 1 1.700-1.700z" fill="none" stroke="#4d90ea" stroke-width="1.4" stroke-linejoin="round" stroke-linecap="round" /><path d="M3 5q1.700-1.500 3.400 0t3.400 0 3.400-.3M3 8q1.700-1.500 3.400 0t3.400 0 3.400-.3M3 11q1.700-1.500 3.400 0t3.400 0 3.400-.3" fill="none" stroke="#1fb8e6" stroke-width="1.1" stroke-linejoin="round" stroke-linecap="round" /></svg>
<div class="t" style="left:341px;top:291px">流体</div>
<svg style="left:869px;top:293px" width="18" height="18" viewBox="0 0 18 18"><path d="M1.500 1.500l15 15m0-15l-15 15" stroke="#101a2e" stroke-width="1.800" fill="none"/></svg>
<div class="gb" style="left:318px;top:340px;width:283px;height:42px"></div>
<div class="gl" style="left:328px;top:331px">区域名称</div>
<div class="a" style="left:328px;top:350px;width:263px;height:22px;background:#fff;border:1px solid #5a5a5a"></div>
<div class="t" style="left:480px;top:352px;width:106px;text-align:right;letter-spacing:.1px">cylinder</div>
<div class="gb" style="left:607px;top:338px;width:283px;height:47px"></div>
<div class="gl" style="left:617px;top:329px">相</div>
<div class="a" style="left:617px;top:348px;width:263px;height:27px;background:#ebebeb;border:1px solid #888;border-radius:4px"></div>
<div class="t" style="left:621px;top:352px;color:#8c8c8c">混合物</div>
<svg style="left:866px;top:357px" width="10" height="9" viewBox="0 0 10 9"><path d="M5 7.500L1.300 3.600a1.900 1.900 0 0 1 3.700-1.600a1.900 1.900 0 0 1 3.700 1.600z" fill="none" stroke="#555" stroke-width="1"/></svg>
<div class="gb" style="left:318px;top:398px;width:572px;height:49px"></div>
<div class="gl" style="left:328px;top:389px">材料名称</div>
<div class="a" style="left:328px;top:409px;width:273px;height:27px;background:#fdfdfd;border:1px solid #6a6a6a;border-radius:4px"></div>
<div class="t" style="left:332px;top:413px">Air</div>
<svg style="left:587px;top:418px" width="10" height="9" viewBox="0 0 10 9"><path d="M5 7.500L1.300 3.600a1.900 1.900 0 0 1 3.700-1.600a1.900 1.900 0 0 1 3.700 1.600z" fill="none" stroke="#333" stroke-width="1"/></svg>
<div class="btn" style="left:607px;top:408px;width:273px;height:29px"></div>
<div class="t" style="left:607px;top:413px;width:274px;text-align:center">编辑</div>
<div class="gb" style="left:318px;top:460px;width:572px;height:83px"></div>
<div class="gl" style="left:328px;top:451px">选项</div>
<div class="cb" style="left:328px;top:472px"></div>
<div class="t" style="left:346px;top:469px;color:#000">运动参考系</div>
<div class="cb" style="left:514px;top:472px"></div>
<div class="t" style="left:532px;top:469px;color:#000">网格运动</div>
<div class="cb" style="left:700px;top:472px"></div>
<div class="t" style="left:718px;top:469px;color:#000">多孔区域</div>
<div class="cb d" style="left:328px;top:495px"></div>
<div class="t" style="left:346px;top:492px;color:#9a9a9a">3D风扇区域</div>
<div class="cb d" style="left:514px;top:495px"></div>
<div class="t" style="left:532px;top:492px;color:#9a9a9a">参与辐射</div>
<div class="cb" style="left:700px;top:495px"></div>
<div class="t" style="left:718px;top:492px;color:#000">源项</div>
<div class="cb d" style="left:328px;top:518px"></div>
<div class="t" style="left:346px;top:515px;color:#9a9a9a">层流</div>
<div class="cb d" style="left:514px;top:518px"></div>
<div class="t" style="left:532px;top:515px;color:#9a9a9a">固定值</div>
<div class="a" style="left:320px;top:551px;width:87px;height:19px;background:#ededed;border:1px solid #d9d9d9"></div>
<div class="t" style="left:320px;top:551px;width:86px;text-align:center;color:#6e6e6e">参考坐标系</div>
<div class="a" style="left:406px;top:551px;width:77px;height:19px;background:#ededed;border:1px solid #d9d9d9"></div>
<div class="t" style="left:406px;top:551px;width:76px;text-align:center;color:#6e6e6e">网格运动</div>
<div class="a" style="left:482px;top:551px;width:77px;height:19px;background:#ededed;border:1px solid #d9d9d9"></div>
<div class="t" style="left:482px;top:551px;width:76px;text-align:center;color:#6e6e6e">多孔区域</div>
<div class="a" style="left:558px;top:551px;width:51px;height:19px;background:#ededed;border:1px solid #d9d9d9"></div>
<div class="t" style="left:558px;top:551px;width:50px;text-align:center;color:#6e6e6e">源项</div>
<div class="a" style="left:318px;top:569px;width:570px;height:438px;background:#fff;border:1px solid #dedede"></div>
<div class="a" style="left:318px;top:1015px;width:572px;height:1px;background:#000"></div>
<div class="btn" style="left:486px;top:1023px;width:68px;height:24px"></div>
<div class="t" style="left:486px;top:1029px;width:68px;text-align:center">确认</div>
<div class="btn" style="left:570px;top:1023px;width:68px;height:24px"></div>
<div class="t" style="left:570px;top:1029px;width:68px;text-align:center">关闭</div>
<div class="btn" style="left:654px;top:1023px;width:68px;height:24px"></div>
<div class="t" style="left:654px;top:1029px;width:68px;text-align:center">帮助</div>
<div class="a" style="left:1920px;top:0;width:1px;height:1041px;background:#8a8f98"></div>
<div class="a" style="left:0;top:1040px;width:1921px;height:1px;background:#2b2b2b"></div>
</body></html>
